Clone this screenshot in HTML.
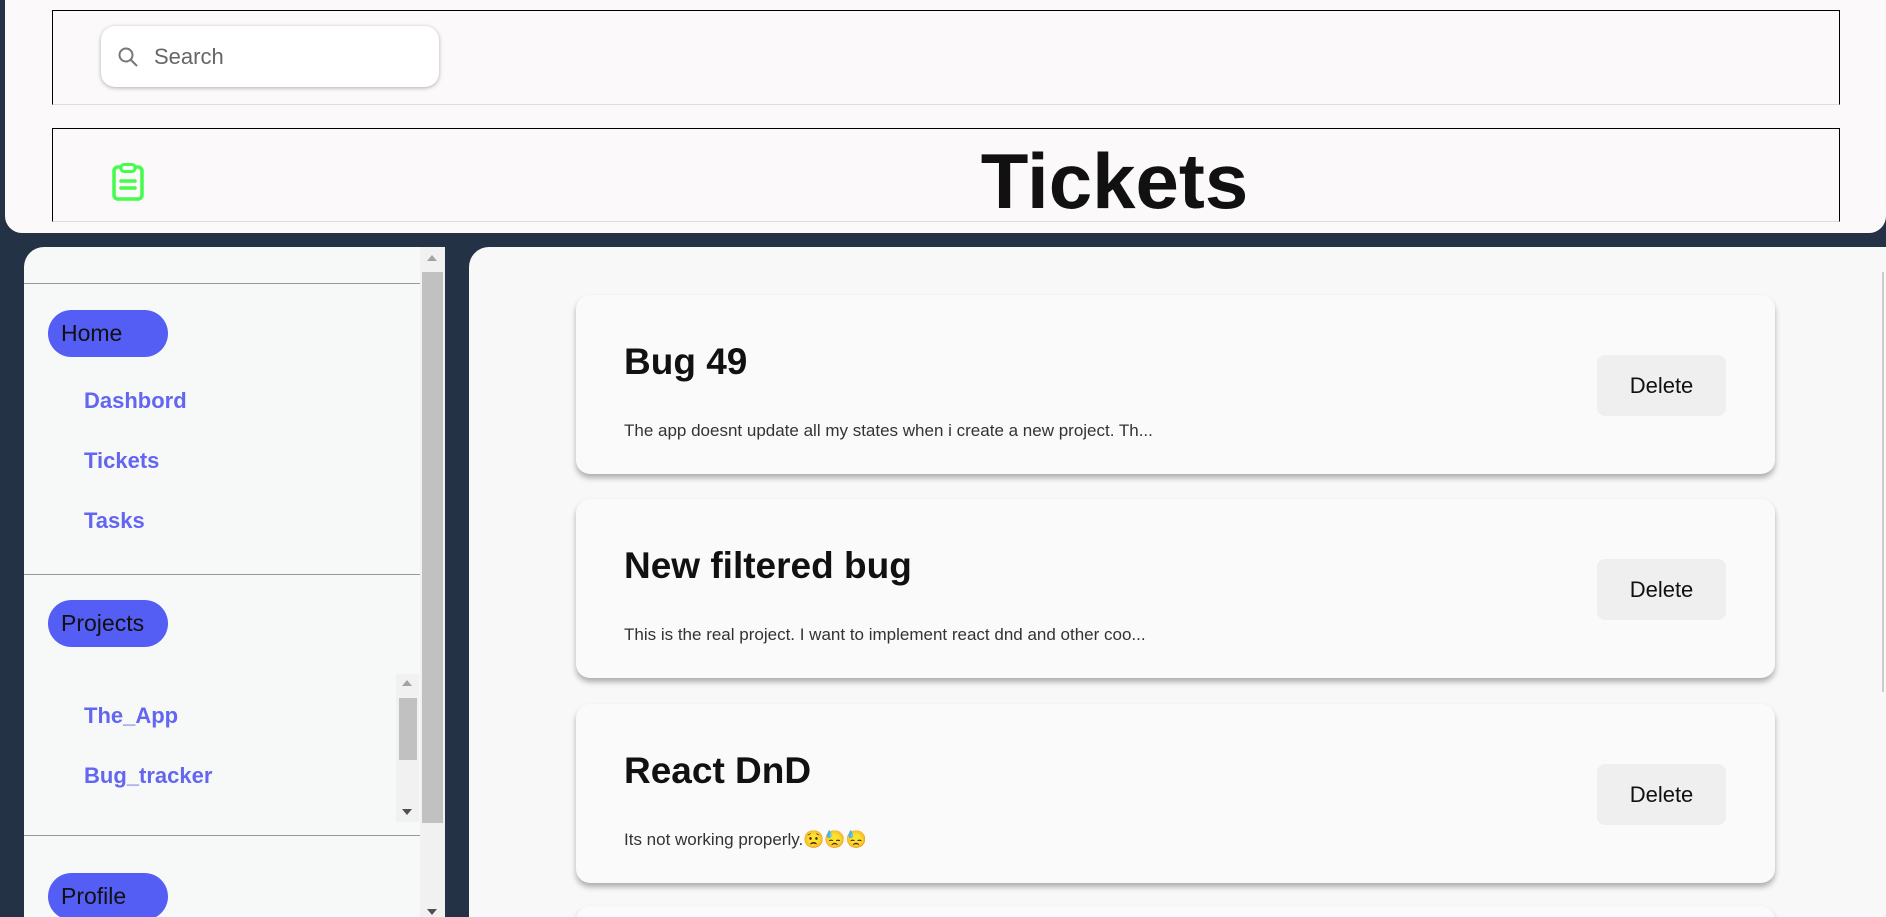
<!DOCTYPE html>
<html><head><meta charset="utf-8"><style>
*{margin:0;padding:0;box-sizing:border-box}
html,body{width:1886px;height:917px;overflow:hidden}
body{background:#233345;font-family:"Liberation Sans",sans-serif;position:relative}
.abs{position:absolute}
#hdr{left:5px;top:0;width:1881px;height:233px;background:#fbf9fa;border-radius:0 0 17px 17px}
.box{position:absolute;left:47px;width:1788px;border:1px solid #000;border-bottom:1px solid #ddd}
#search{left:96px;top:26px;width:338px;height:61px;background:#fff;border-radius:14px;box-shadow:0 1px 4px rgba(0,0,0,.3)}
#search span{position:absolute;left:53px;top:18px;font-size:22px;color:#666}
#title{left:0;width:1881px;top:136px;text-align:center;font-size:78px;font-weight:bold;color:#111;line-height:90px;padding-left:338px}
#side{left:24px;top:247px;width:421px;height:670px;background:#f7f9f9;border-radius:20px 0 0 0;overflow:hidden}
.hr{position:absolute;left:0;width:396px;height:1px;background:#999}
.pill{position:absolute;left:24px;width:120px;height:47px;border-radius:24px;background:#545df4;color:#111;font-size:23px;line-height:47px;padding-left:13px}
.lnk{position:absolute;left:60px;font-size:22px;font-weight:bold;color:#6366f1;line-height:26px}
#main{left:469px;top:247px;width:1417px;height:670px;background:#f8f8f8;border-radius:20px 0 0 0;overflow:hidden}
.card{position:absolute;left:107px;width:1199px;height:179px;background:#fafafa;border-radius:14px;box-shadow:0 4px 6px rgba(0,0,0,.3)}
.card h2{position:absolute;left:48px;top:46px;font-size:37px;font-weight:bold;color:#111}
.card p{position:absolute;left:48px;top:126px;font-size:17px;color:#333}
.card .del{position:absolute;left:1021px;top:60px;width:129px;height:61px;background:#efefef;border-radius:8px;font-size:22px;line-height:61px;text-align:center;color:#111}
</style></head><body>
<div id="hdr" class="abs">
 <div class="box" style="top:10px;height:95px"></div>
 <div class="box" style="top:128px;height:94px"></div>
 <div id="search" class="abs">
  <svg class="abs" style="left:16px;top:20px" width="22" height="22" viewBox="0 0 22 22"><circle cx="9" cy="9" r="6.5" fill="none" stroke="#777" stroke-width="2"/><line x1="14" y1="14" x2="20" y2="20" stroke="#777" stroke-width="2"/></svg>
  <span>Search</span>
 </div>
 <svg class="abs" style="left:107px;top:163px" width="32" height="38" viewBox="0 0 32 38"><rect x="2" y="4" width="28" height="32" rx="4" fill="none" stroke="#44fc4a" stroke-width="3.5"/><rect x="9" y="1.5" width="14" height="7" rx="3" fill="#fbf9fa" stroke="#44fc4a" stroke-width="3"/><line x1="9" y1="18" x2="23" y2="18" stroke="#44fc4a" stroke-width="3.5" stroke-linecap="round"/><line x1="9" y1="25" x2="23" y2="25" stroke="#44fc4a" stroke-width="3.5" stroke-linecap="round"/></svg>
 <div id="title" class="abs">Tickets</div>
</div>
<div id="side" class="abs">
 <div class="hr" style="top:36px"></div>
 <div class="pill" style="top:63px">Home</div>
 <div class="lnk" style="top:141px">Dashbord</div>
 <div class="lnk" style="top:201px">Tickets</div>
 <div class="lnk" style="top:261px">Tasks</div>
 <div class="hr" style="top:327px"></div>
 <div class="pill" style="top:353px">Projects</div>
 <div class="abs" style="left:372px;top:427px;width:23px;height:148px;background:#f1f1f1"></div>
 <div class="abs" style="left:375px;top:451px;width:18px;height:62px;background:#c1c1c1"></div>
 <div class="abs" style="left:378px;top:433px;width:0;height:0;border:5px solid transparent;border-bottom:6px solid #a3a3a3;border-top:0"></div>
 <div class="abs" style="left:378px;top:562px;width:0;height:0;border:5px solid transparent;border-top:6px solid #505050;border-bottom:0"></div>
 <div class="lnk" style="top:456px">The_App</div>
 <div class="lnk" style="top:516px">Bug_tracker</div>
 <div class="hr" style="top:588px"></div>
 <div class="pill" style="top:626px">Profile</div>
 <div class="abs" style="left:396px;top:0;width:25px;height:670px;background:#f1f1f1"></div>
 <div class="abs" style="left:398px;top:25px;width:21px;height:551px;background:#c1c1c1"></div>
 <div class="abs" style="left:403px;top:8px;width:0;height:0;border:5px solid transparent;border-bottom:6px solid #a3a3a3;border-top:0"></div>
 <div class="abs" style="left:403px;top:662px;width:0;height:0;border:5px solid transparent;border-top:6px solid #505050;border-bottom:0"></div>
</div>
<div id="main" class="abs">
 <div class="abs" style="right:2px;top:25px;width:2px;height:420px;background:#ccc"></div>
 <div class="card" style="top:48px"><h2>Bug 49</h2><p>The app doesnt update all my states when i create a new project. Th...</p><div class="del">Delete</div></div>
 <div class="card" style="top:252px"><h2>New filtered bug</h2><p>This is the real project. I want to implement react dnd and other coo...</p><div class="del">Delete</div></div>
 <div class="card" style="top:457px"><h2>React DnD</h2><p>Its not working properly.😟😓😓</p><div class="del">Delete</div></div>
 <div class="card" style="top:659px"></div>
</div>
</body></html>
